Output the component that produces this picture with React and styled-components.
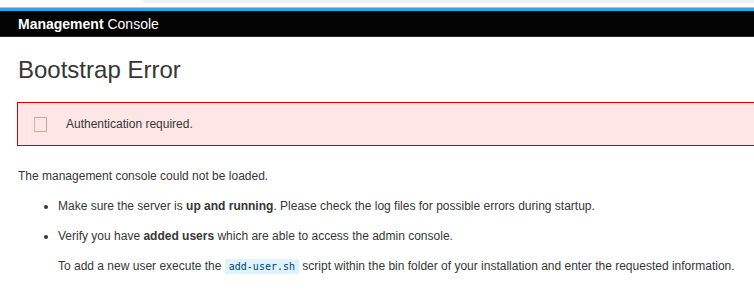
import styled, { createGlobalStyle } from 'styled-components';

const GlobalStyle = createGlobalStyle`
  html, body {
    margin: 0;
    padding: 0;
    background: #fff;
    overflow: hidden;
  }
  body {
    font-family: "Liberation Sans", Arial, sans-serif;
    font-size: 12px;
    line-height: 20px;
    color: #363636;
  }
`;

const App = () => {
  return (
    <Page>
      <GlobalStyle />
      <TopStrip>
        <StripTab />
      </TopStrip>
      <Navbar>
        <Brand>
          <strong>Management</strong> Console
        </Brand>
      </Navbar>
      <Content>
        <Title>Bootstrap Error</Title>
        <Alert>
          <AlertIcon />
          Authentication required.
        </Alert>
        <Text>The management console could not be loaded.</Text>
        <List>
          <li>
            <Text>
              Make sure the server is <strong>up and running</strong>. Please check the log files for
              possible errors during startup.
            </Text>
          </li>
          <li>
            <Text>
              Verify you have <strong>added users</strong> which are able to access the admin console.
            </Text>
            <Text>
              To add a new user execute the <Code>add-user.sh</Code> script within the bin folder of
              your installation and enter the requested information.
            </Text>
          </li>
        </List>
      </Content>
    </Page>
  );
};

const Page = styled.div`
  width: 100%;
`;

const TopStrip = styled.div`
  display: flex;
  height: 7px;
  border-bottom: 1px solid #b9c3ca;
`;

const StripTab = styled.div`
  margin-left: 143px;
  flex: 1;
  height: 3px;
  background: #eef0f2;
  border-bottom-left-radius: 5px;
`;

const Navbar = styled.div`
  background: #030303;
  border-top: 3px solid #39a5dc;
  border-bottom: 1px solid #2b2b2b;
  display: flex;
  align-items: center;
  padding: 1px 18px 0;
  box-sizing: border-box;
  height: 29px;
`;

const Brand = styled.div`
  color: #fff;
  font-size: 14px;
  line-height: 16px;

  strong {
    font-weight: 700;
  }
`;

const Content = styled.div`
  padding: 0 0 0 18px;
`;

const Title = styled.h1`
  margin: 20px 0 0;
  font-size: 24px;
  font-weight: 400;
  line-height: 26px;
  color: #363636;
`;

const Alert = styled.div`
  position: relative;
  margin: 19px 0 20px -1px;
  padding: 11px 0 11px 48px;
  background: #ffe6e6;
  border: 1px solid #cc0000;
  border-right: none;
  line-height: 20px;
`;

const AlertIcon = styled.span`
  position: absolute;
  left: 16px;
  top: 14px;
  width: 11px;
  height: 13px;
  border: 1px solid #dba0a0;
  border-left-color: #e8b090;
`;

const Text = styled.p`
  margin: 0 0 10px;
  line-height: 20px;

  strong {
    font-weight: 700;
  }
`;

const List = styled.ul`
  margin: 0;
  padding-left: 40px;
`;

const Code = styled.code`
  font-family: "DejaVu Sans Mono", "Liberation Mono", monospace;
  font-size: 10px;
  padding: 2px 4px;
  color: #004368;
  background: #def3ff;
`;

export default App;
